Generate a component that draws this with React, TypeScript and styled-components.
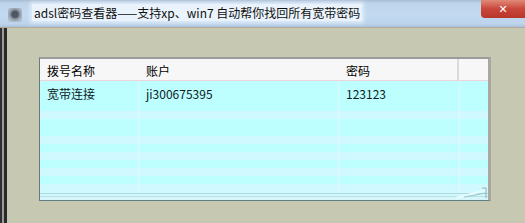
import React from "react";
import styled, { createGlobalStyle } from "styled-components";

const Global = createGlobalStyle`
  html, body { margin: 0; padding: 0; background: #c7c8b2; }
  #root { width: 525px; height: 223px; overflow: hidden; }
`;

const Window = styled.div`
  width: 525px;
  height: 223px;
  display: flex;
  flex-direction: column;
  background: #c7c8b2;
  font-family: "Noto Sans CJK SC", "Liberation Sans", sans-serif;
  overflow: hidden;
`;

const TitleBar = styled.div`
  height: 27px;
  flex: none;
  display: flex;
  align-items: flex-start;
  background: linear-gradient(180deg, #a9bcd0 0px, #bcd3ea 3px, #c3daf0 14px, #bcd4ec 24px, #a9c2dc 27px);
  border-bottom: 1px solid #b8a89a;
  position: relative;
`;

const AppIcon = styled.div`
  flex: none;
  width: 14px;
  height: 14px;
  margin: 8px 0 0 8px;
  border-radius: 2px;
  background: radial-gradient(circle at 50% 45%, #4e5864 0 3px, #8e9aa6 5px, #b4c0cc 8px);
`;

const Title = styled.div`
  flex: none;
  margin: 4px 0 0 10px;
  padding: 0 2px;
  height: 17px;
  font-size: 12px;
  line-height: 17px;
  color: #101010;
  background: rgba(238, 246, 253, 0.9);
  box-shadow: 0 0 4px 2px rgba(238, 246, 253, 0.7);
  white-space: nowrap;
`;

const CloseButton = styled.div`
  position: absolute;
  right: 0;
  top: 0;
  width: 44px;
  height: 18px;
  background: linear-gradient(180deg, #e08a78 0%, #c8463a 50%, #b8352a 100%);
  border-bottom-left-radius: 4px;
  display: flex;
  align-items: center;
  justify-content: center;
  color: #fff;
  font-size: 11px;
  font-weight: bold;
  font-family: "DejaVu Sans", sans-serif;
`;

const Body = styled.div`
  flex: 1;
  display: flex;
`;

const LeftFrame = styled.div`
  flex: none;
  width: 7px;
  background: linear-gradient(90deg, #303030 0 2px, #9a9a9a 2px 4px, #2a2a2a 4px 7px);
`;

const Content = styled.div`
  flex: 1;
  padding: 29px 0 0 32px;
`;

const Table = styled.div`
  width: 448px;
  height: 141px;
  display: flex;
  flex-direction: column;
  border-top: 2px solid #9c9c9c;
  border-left: 1px solid #6a7a7a;
  border-right: 3px solid #a8a8a0;
  border-bottom: 1px solid #5f7f84;
  background: #c0fdff;
  position: relative;
`;

const HeaderRow = styled.div`
  height: 21px;
  flex: none;
  display: grid;
  grid-template-columns: 99px 200px 120px 1fr;
  background: #f7f7f7;
  border-bottom: 1px solid #f0d4dc;
`;

const HeaderCell = styled.div<{ $sep?: boolean }>`
  font-size: 12px;
  line-height: 24px;
  padding-left: 7px;
  color: #000;
  border-right: ${(p) => (p.$sep ? "2px solid #dcdcdc" : "none")};
`;

const Rows = styled.div`
  flex: 1;
  display: flex;
  flex-direction: column;
  position: relative;
`;

const Band = styled.div<{ $h: number; $light?: boolean }>`
  height: ${(p) => p.$h}px;
  flex: none;
  background: ${(p) => (p.$light ? "#cff9ff" : "#bdffff")};
  display: grid;
  grid-template-columns: 99px 200px 120px 1fr;
`;

const Cell = styled.div`
  font-size: 12px;
  line-height: 26px;
  padding-left: 7px;
  color: #0c1a24;
`;

const BottomStrip = styled.div`
  flex: 1;
  background: linear-gradient(180deg, #d2f8fc 0 1px, #a8dce2 1px 2px, #d2f8fc 2px 4px, #b4e2e8 4px 5px, #d6f6fa 5px);
`;

const ColLine = styled.div<{ $x: number }>`
  position: absolute;
  top: 0;
  bottom: 8px;
  width: 3px;
  left: ${(p) => p.$x}px;
  background: rgba(225, 248, 255, 0.45);
`;

const Grip = styled.svg`
  position: absolute;
  right: 0;
  bottom: 0;
`;

const bands: { h: number; light?: boolean }[] = [
  { h: 8, light: true },
  { h: 17 },
  { h: 8, light: true },
  { h: 8 },
  { h: 8, light: true },
  { h: 8 },
  { h: 8, light: true },
  { h: 8 },
  { h: 8, light: true },
];

export default function App() {
  return (
    <Window>
      <Global />
      <TitleBar>
        <AppIcon />
        <Title>adsl密码查看器——支持xp、win7 自动帮你找回所有宽带密码</Title>
        <CloseButton>✕</CloseButton>
      </TitleBar>
      <Body>
        <LeftFrame />
        <Content>
          <Table>
            <HeaderRow>
              <HeaderCell>拨号名称</HeaderCell>
              <HeaderCell>账户</HeaderCell>
              <HeaderCell $sep>密码</HeaderCell>
              <HeaderCell />
            </HeaderRow>
            <Rows>
              <Band $h={30}>
                <Cell>宽带连接</Cell>
                <Cell>ji300675395</Cell>
                <Cell>123123</Cell>
                <Cell />
              </Band>
              {bands.map((b, i) => (
                <Band key={i} $h={b.h} $light={b.light} />
              ))}
              <BottomStrip />
              <ColLine $x={97} />
              <ColLine $x={297} />
              <ColLine $x={418} />
              <Grip width="34" height="16" viewBox="0 0 34 16">
                <path d="M2 14 L32 6" stroke="#e8fbff" strokeWidth="2" />
                <path d="M10 13 L32 9" stroke="#9fc6cc" strokeWidth="1" />
                <path d="M28 4 h4 v10" stroke="#8fb0b4" strokeWidth="1" fill="none" />
              </Grip>
            </Rows>
          </Table>
        </Content>
      </Body>
    </Window>
  );
}
